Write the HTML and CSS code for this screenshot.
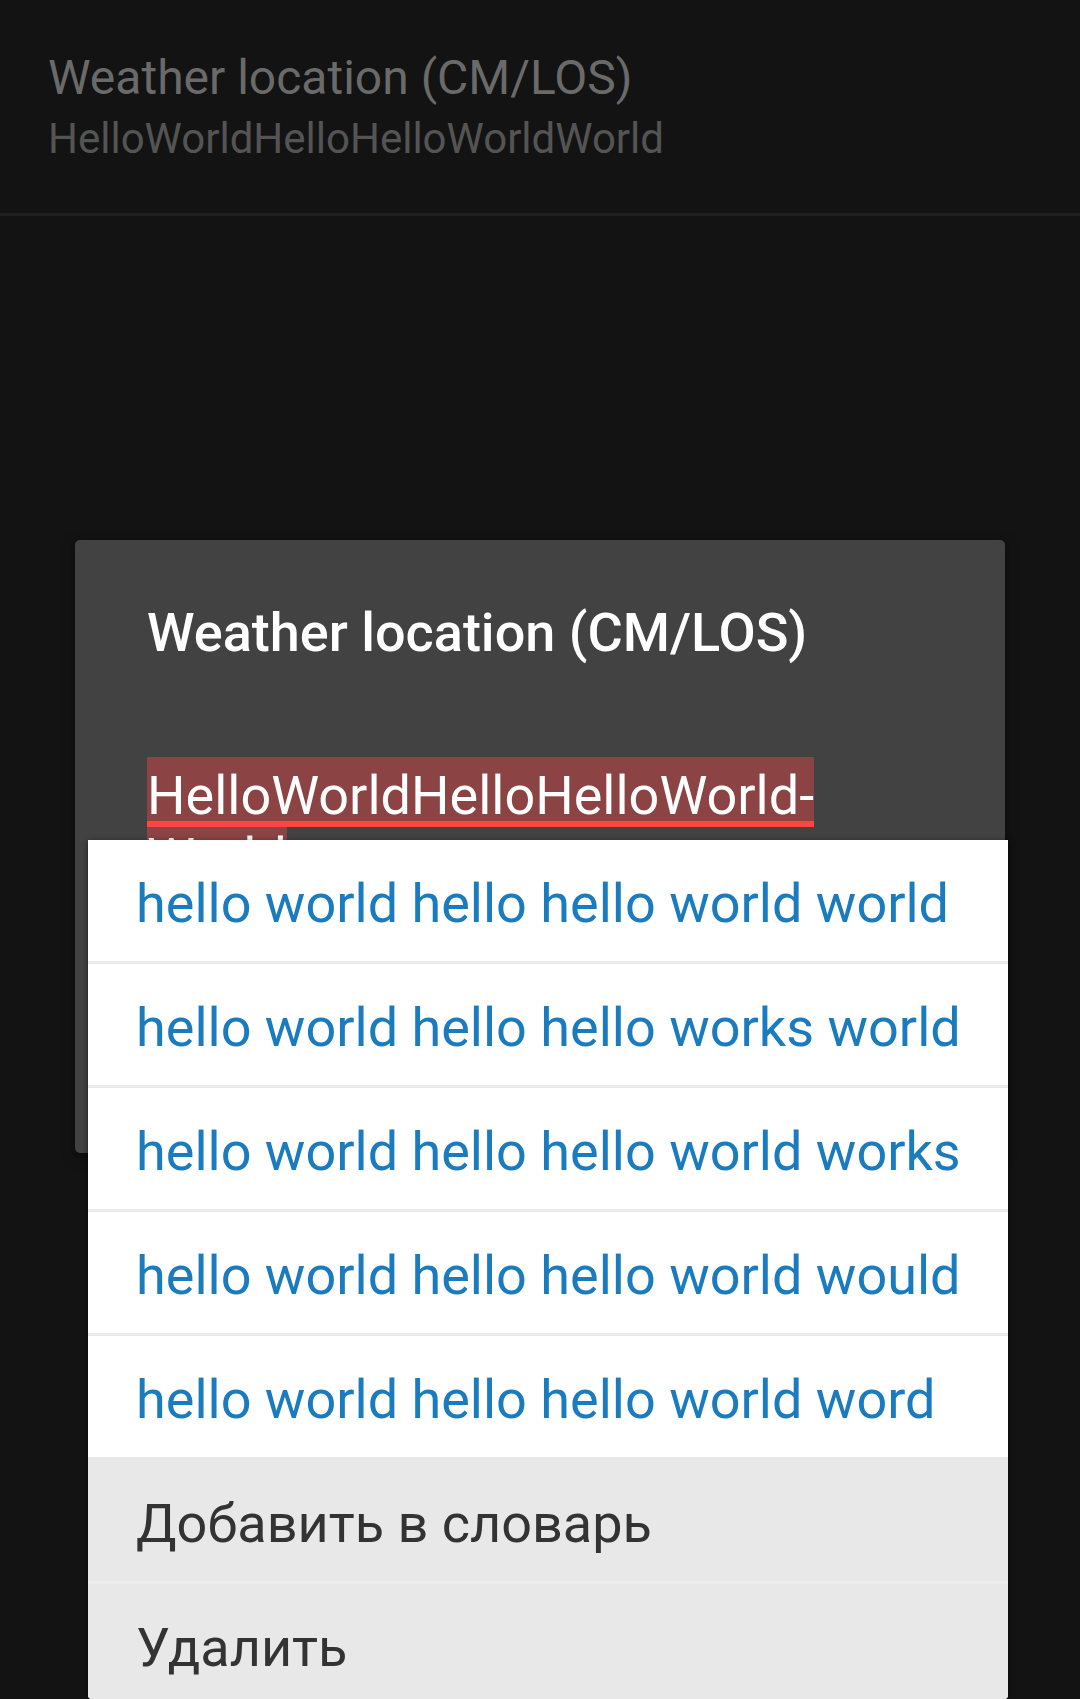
FILE: index.html
```html
<!DOCTYPE html>
<html lang="en">
<head>
<meta charset="utf-8">
<title>Weather location</title>
<link rel="stylesheet" href="styles.css">
</head>
<body>
<div class="screen">
  <header class="pref">
    <div class="pref-title">Weather location (CM/LOS)</div>
    <div class="pref-summary">HelloWorldHelloHelloWorldWorld</div>
  </header>
  <div class="divider"></div>

  <div class="dialog">
    <div class="dlg-title">Weather location (CM/LOS)</div>
    <div class="edit">
      <div class="sel-line first">HelloWorldHelloHelloWorld-</div>
      <div class="sel-line second">World</div>
    </div>
  </div>

  <div class="popup">
    <div class="row sugg">hello world hello hello world world</div>
    <div class="row sugg">hello world hello hello works world</div>
    <div class="row sugg">hello world hello hello world works</div>
    <div class="row sugg">hello world hello hello world would</div>
    <div class="row sugg">hello world hello hello world word</div>
    <div class="row action">Добавить в словарь</div>
    <div class="row action">Удалить</div>
  </div>
</div>
</body>
</html>
```

FILE: styles.css
```css
* { box-sizing: border-box; }
html, body {
  margin: 0;
  padding: 0;
  background: #131313;
  overflow: hidden;
}
body {
  font-family: Roboto, "Noto Sans", "Liberation Sans", sans-serif;
}
.screen {
  position: relative;
  width: 1080px;
  height: 1699px;
  overflow: hidden;
  background: #131313;
}
.pref {
  padding: 50px 0 46px 48px;
}
.pref-title {
  font-size: 48px;
  line-height: 56px;
  color: #6a6a6a;
  white-space: nowrap;
}
.pref-summary {
  margin-top: 5px;
  font-size: 42px;
  line-height: 56px;
  color: #545454;
  white-space: nowrap;
}
.divider {
  height: 3px;
  background: #1f1f1f;
}

.dialog {
  position: absolute;
  left: 75px;
  top: 540px;
  width: 930px;
  height: 613px;
  background: #424242;
  border-radius: 5px;
  box-shadow: 0 4px 12px rgba(0,0,0,0.5);
}
.dlg-title {
  padding: 61px 0 0 72px;
  font-size: 54px;
  line-height: 64px;
  font-weight: 500;
  color: #ffffff;
  white-space: nowrap;
}
.edit {
  margin: 92px 0 0 72px;
}
.sel-line {
  width: fit-content;
  background: #8c4343;
  color: #ffffff;
  font-size: 54px;
  line-height: 50px;
  white-space: nowrap;
}
.sel-line.first {
  height: 70px;
  padding-top: 14px;
  border-bottom: 6px solid #ff4444;
}
.sel-line.second {
  height: 64px;
  padding-top: 6px;
}

.popup {
  position: absolute;
  left: 88px;
  top: 840px;
  width: 920px;
  height: 859px;
  background: #ffffff;
  border-radius: 0 0 4px 4px;
  overflow: hidden;
  box-shadow: 0 2px 6px rgba(0,0,0,0.6);
}
.row {
  height: 124px;
  padding: 6px 0 0 48px;
  font-size: 54px;
  line-height: 115px;
  white-space: nowrap;
  border-top: 3px solid #ebebeb;
}
.row:first-child {
  height: 121px;
  padding-top: 6px;
  border-top: 0;
}
.row.sugg {
  color: #1a7bbf;
  background: #ffffff;
}
.row.action {
  color: #333333;
  background: #e8e8e8;
  border-top-color: #ededed;
}
.row.sugg + .row.action {
  border-top-color: #e8e8e8;
}
```
